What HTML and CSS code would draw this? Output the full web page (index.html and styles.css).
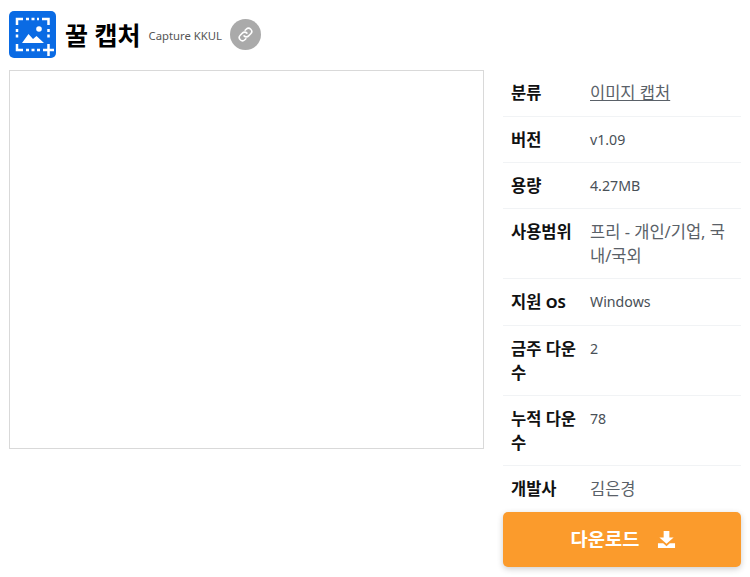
FILE: index.html
```html
<!DOCTYPE html>
<html lang="ko">
<head>
<meta charset="utf-8">
<title>꿀 캡처</title>
<link rel="stylesheet" href="styles.css">
</head>
<body>
<header class="head">
  <svg class="logo" viewBox="0 0 47 47" width="47" height="47">
    <rect width="47" height="47" rx="5" fill="#0a6be4"/>
    <g fill="none" stroke="#fff" stroke-width="2.500">
      <path d="M8 14V8H14"/>
      <path d="M33 8H39.500V14"/>
      <path d="M8 33V39H14"/>
      <path d="M39.500 33V45M34 39H45"/>
      <path d="M17 8H30M8 18V29M39.500 18V29M17 39H31" stroke-dasharray="3 2.500"/>
    </g>
    <path d="M13 32L19.500 23L24 28L27.500 25L35 32Z" fill="#fff"/>
    <circle cx="30" cy="18" r="2.800" fill="#fff"/>
  </svg>
  <h1 class="title">꿀 캡처</h1>
  <span class="sub">Capture KKUL</span>
  <span class="link-btn">
    <svg viewBox="0 0 24 24" width="17" height="17" fill="none" stroke="#fff" stroke-width="2.200" stroke-linecap="round">
      <path d="M10 14a4.500 4.500 0 0 0 6.400 0l3-3a4.500 4.500 0 0 0-6.400-6.400l-1.500 1.500"/>
      <path d="M14 10a4.500 4.500 0 0 0-6.400 0l-3 3a4.500 4.500 0 0 0 6.400 6.400l1.500-1.500"/>
    </svg>
  </span>
</header>
<main class="body">
  <div class="shot"></div>
  <aside class="side">
    <dl class="info">
      <div class="row"><dt>분류</dt><dd><a class="cat ko" href="#">이미지 캡처</a></dd></div>
      <div class="row"><dt>버전</dt><dd>v1.09</dd></div>
      <div class="row"><dt>용량</dt><dd>4.27MB</dd></div>
      <div class="row"><dt>사용범위</dt><dd class="ko">프리 - 개인/기업, 국내/국외</dd></div>
      <div class="row"><dt>지원 <span class="lat">OS</span></dt><dd>Windows</dd></div>
      <div class="row"><dt>금주 다운수</dt><dd>2</dd></div>
      <div class="row"><dt>누적 다운수</dt><dd>78</dd></div>
      <div class="row last"><dt>개발사</dt><dd class="ko">김은경</dd></div>
    </dl>
    <a class="dl" href="#">다운로드
      <svg class="dl-icon" viewBox="0 0 20 20" width="19" height="19" fill="#fff">
        <path d="M7 1H13V8H17.500L10 14.500L2.500 8H7Z"/>
        <path d="M1 14H6.500L10 17L13.500 14H19V19H1Z"/>
      </svg>
    </a>
  </aside>
</main>
</body>
</html>
```
FILE: styles.css
```css
html, body { margin: 0; padding: 0; }
body {
  width: 750px;
  height: 577px;
  overflow: hidden;
  background: #fff;
  font-family: "Noto Sans", "Noto Sans CJK KR", sans-serif;
  font-size: 14.200px;
  color: #495057;
}
.head {
  display: flex;
  align-items: center;
  height: 47px;
  padding: 11px 0 12px 9px;
}
.logo { display: block; flex: none; }
.title {
  margin: 0 0 0 9px;
  font-size: 25px;
  font-weight: 700;
  line-height: 32px;
  color: #000;
}
.sub {
  margin: 2px 0 0 8px;
  font-size: 11.300px;
  color: #555;
}
.link-btn {
  display: flex;
  align-items: center;
  justify-content: center;
  width: 31px;
  height: 31px;
  margin: -1px 0 0 8px;
  border-radius: 50%;
  background: #aaa;
}
.body {
  display: flex;
  align-items: flex-start;
  padding-left: 9px;
}
.shot {
  flex: none;
  box-sizing: border-box;
  width: 475px;
  height: 379px;
  border: 1px solid #d9d9d9;
}
.side {
  flex: none;
  width: 238px;
  margin-left: 19px;
}
.info { margin: 0; height: 442px; }
.row {
  display: grid;
  grid-template-columns: 79px 1fr;
  border-bottom: 1px solid #f1f3f5;
  line-height: 23.800px;
  padding: 11px 0 10.300px;
}
.row.last { border-bottom: 0; }
dt {
  padding-left: 8px;
  font-size: 16.500px;
  font-weight: 700;
  color: #111;
}
dd {
  margin: 0;
  padding: 0 8px;
}
.ko { font-size: 16.500px; color: #5a6168; }
.lat { font-size: 15px; }
.cat { color: #5a6168; text-decoration: underline; }
.dl {
  display: flex;
  align-items: center;
  justify-content: center;
  gap: 18px;
  box-sizing: border-box;
  height: 55px;
  padding: 0 0 4px 3px;
  border-radius: 5px;
  background: #fb9b2c;
  box-shadow: 0 2px 6px rgba(0, 0, 0, .2);
  color: #fff;
  font-size: 18.700px;
  font-weight: 700;
  text-decoration: none;
}
.dl-icon { margin-top: 4px; }
```
